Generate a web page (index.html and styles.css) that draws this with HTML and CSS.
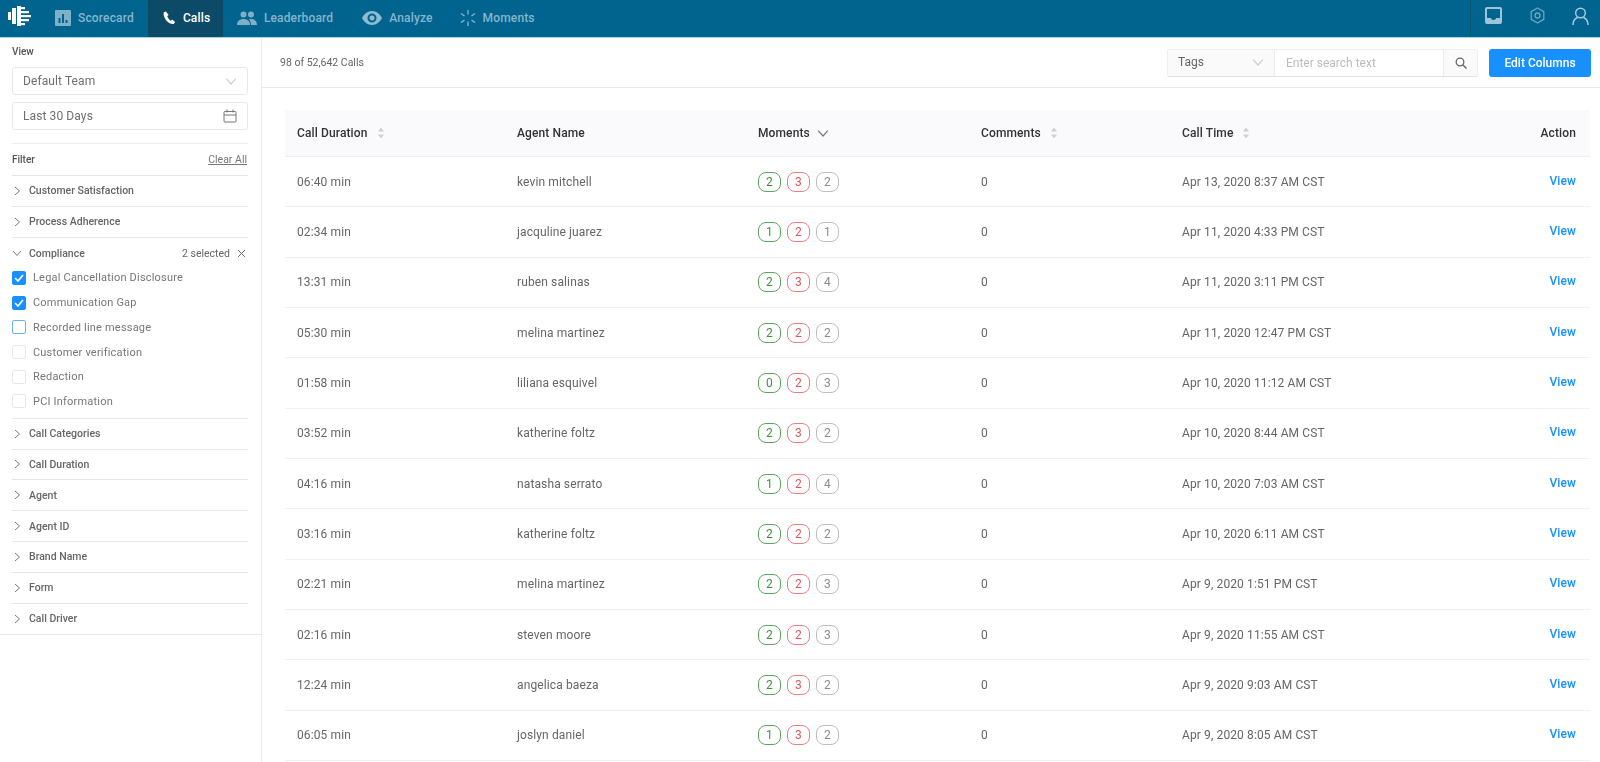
FILE: index.html
```html
<!DOCTYPE html>
<html lang="en">
<head>
<meta charset="utf-8">
<title>Calls</title>
<link rel="stylesheet" href="styles.css">
</head>
<body>
<svg class="defs" width="0" height="0" aria-hidden="true">
  <symbol id="sort" viewBox="0 0 8 12"><path d="M4 0.500 7 4.500H1Z M4 11.500 1 7.500H7Z" fill="#cfcfd2"/></symbol>
  <symbol id="chev-r" viewBox="0 0 10 10"><path d="M3 1 7.500 5 3 9" fill="none" stroke="#777" stroke-width="1"/></symbol>
  <symbol id="chev-d" viewBox="0 0 10 10"><path d="M1 3 5 7.500 9 3" fill="none" stroke="#777" stroke-width="1"/></symbol>
</svg>
<header class="topbar">
  <svg class="logo" viewBox="0 0 23 20" width="23" height="20">
    <g fill="#fff">
      <rect x="0" y="6" width="3" height="8"/>
      <rect x="4" y="2" width="4" height="16"/>
      <rect x="9" y="0" width="4" height="20"/>
      <rect x="13" y="1" width="4" height="2.200"/>
      <rect x="13" y="5" width="8" height="2.200"/>
      <rect x="13" y="9" width="10" height="2.200"/>
      <rect x="13" y="13" width="8" height="2.200"/>
      <rect x="13" y="17" width="4" height="2.200"/>
    </g>
  </svg>
  <nav class="nav">
    <a class="nav-item nav-score">
      <svg class="nav-icon" width="16" height="16" viewBox="0 0 16 16"><path fill="#7fb0c8" fill-rule="evenodd" d="M1 0h14a1 1 0 0 1 1 1v14a1 1 0 0 1-1 1H1a1 1 0 0 1-1-1V1a1 1 0 0 1 1-1ZM3.500 8v5h2V8Zm3.500-4v9h2V4Zm3.500 6v3h2v-3Z"/></svg>
      <span>Scorecard</span>
    </a>
    <a class="nav-item nav-active">
      <svg class="nav-icon" width="14" height="15" viewBox="0 0 24 24"><path fill="#fff" d="M6.600 1.500 3 3C2 7 3.500 12 7 16.500s8 7 13 6.500l2.500-3.500-5-4-2.500 2c-2-.7-5.500-5-6-8l2.500-2Z"/></svg>
      <span>Calls</span>
    </a>
    <a class="nav-item nav-board">
      <svg class="nav-icon" width="20" height="14" viewBox="0 0 20 14"><g fill="#7fb0c8"><circle cx="6.500" cy="3.500" r="3"/><circle cx="14" cy="3.500" r="3"/><path d="M0 14c0-4 3-6 6.500-6S13 10 13 14Z"/><path d="M14 14c0-2-.5-4-2-5.600.7-.3 1.400-.4 2.200-.4 3 0 5.800 2 5.800 6Z"/></g></svg>
      <span>Leaderboard</span>
    </a>
    <a class="nav-item nav-analyze">
      <svg class="nav-icon" width="20" height="14" viewBox="0 0 20 14"><path fill="#8fbcd2" fill-rule="evenodd" d="M10 0c4.500 0 8 3 10 7-2 4-5.500 7-10 7S2 11 0 7c2-4 5.500-7 10-7Zm0 2.500a4.500 4.500 0 1 0 0 9 4.500 4.500 0 0 0 0-9Zm0 2a2.500 2.500 0 1 1 0 5 2.500 2.500 0 0 1 0-5Z"/></svg>
      <span>Analyze</span>
    </a>
    <a class="nav-item nav-moments">
      <svg class="nav-icon" width="16" height="16" viewBox="0 0 16 16"><g stroke="#8fbcd2" stroke-width="1.200" fill="none"><path d="M8 0v4.500M8 11.500V16M1 3.500 4.500 6M11.500 10 15 12.500M1 12.500 4.500 10M11.500 6 15 3.500"/></g></svg>
      <span>Moments</span>
    </a>
  </nav>
  <div class="top-actions">
    <svg width="17" height="17" viewBox="0 0 17 17"><path fill="#9cc6d8" fill-rule="evenodd" d="M2 0h13a2 2 0 0 1 2 2v13a2 2 0 0 1-2 2H2a2 2 0 0 1-2-2V2a2 2 0 0 1 2-2Zm0 2v9h4c0 1 1 2 2.500 2S11 12 11 11h4V2Z"/></svg>
    <svg width="17" height="17" viewBox="0 0 17 17"><g fill="none" stroke="#6fa6c0" stroke-width="1.300"><path d="M8.500 1 14.800 4.600V12.400L8.500 16 2.200 12.400V4.600Z" stroke-linejoin="round"/><circle cx="8.500" cy="8.500" r="2.500"/></g></svg>
    <svg width="17" height="18" viewBox="0 0 17 18"><g fill="none" stroke="#a9cddd" stroke-width="1.400"><circle cx="8.500" cy="6" r="4.800"/><path d="M1 18c0-4 2-6.500 4.500-7.500M16 18c0-4-2-6.500-4.500-7.500"/></g></svg>
  </div>
</header>
<div class="layout">
  <aside class="sidebar">
    <section class="view-block">
      <div class="label">View</div>
      <div class="field">
        <span>Default Team</span>
        <svg class="chev-light" width="12" height="12"><use href="#chev-d"/></svg>
      </div>
      <div class="field field-date">
        <span>Last 30 Days</span>
        <svg width="14" height="14" viewBox="0 0 14 14"><g fill="none" stroke="#777" stroke-width="1"><rect x="1" y="2.500" width="12" height="10.500" rx="1"/><path d="M1 6h12M4 0.500v3M10 0.500v3"/></g></svg>
      </div>
    </section>
    <section class="filters">
      <div class="filter-head"><span class="label">Filter</span><a class="clear">Clear All</a></div>
      <div class="group"><svg width="10" height="10"><use href="#chev-r"/></svg><b>Customer Satisfaction</b></div>
      <div class="group"><svg width="10" height="10"><use href="#chev-r"/></svg><b>Process Adherence</b></div>
      <div class="group group-open">
        <svg width="10" height="10"><use href="#chev-d"/></svg><b>Compliance</b>
        <span class="selected">2 selected</span>
        <svg class="close" width="9" height="9" viewBox="0 0 9 9"><path d="M1 1 8 8M8 1 1 8" stroke="#666" fill="none"/></svg>
      </div>
      <ul class="checks">
        <li><i class="box on"><svg width="10" height="8" viewBox="0 0 10 8"><path d="M1 4 4 7 9 1" fill="none" stroke="#fff" stroke-width="1.700"/></svg></i>Legal Cancellation Disclosure</li>
        <li><i class="box on"><svg width="10" height="8" viewBox="0 0 10 8"><path d="M1 4 4 7 9 1" fill="none" stroke="#fff" stroke-width="1.700"/></svg></i>Communication Gap</li>
        <li><i class="box focus"></i>Recorded line message</li>
        <li><i class="box"></i>Customer verification</li>
        <li><i class="box"></i>Redaction</li>
        <li><i class="box"></i>PCI Information</li>
      </ul>
      <div class="group"><svg width="10" height="10"><use href="#chev-r"/></svg><b>Call Categories</b></div>
      <div class="group"><svg width="10" height="10"><use href="#chev-r"/></svg><b>Call Duration</b></div>
      <div class="group"><svg width="10" height="10"><use href="#chev-r"/></svg><b>Agent</b></div>
      <div class="group"><svg width="10" height="10"><use href="#chev-r"/></svg><b>Agent ID</b></div>
      <div class="group"><svg width="10" height="10"><use href="#chev-r"/></svg><b>Brand Name</b></div>
      <div class="group"><svg width="10" height="10"><use href="#chev-r"/></svg><b>Form</b></div>
      <div class="group"><svg width="10" height="10"><use href="#chev-r"/></svg><b>Call Driver</b></div>
    </section>
  </aside>
  <main class="content">
    <div class="toolbar">
      <span class="count">98 of 52,642 Calls</span>
      <div class="search">
        <div class="search-type"><span>Tags</span><svg class="chev-light" width="12" height="12"><use href="#chev-d"/></svg></div>
        <div class="search-input">Enter search text</div>
        <div class="search-btn"><svg width="12" height="12" viewBox="0 0 12 12"><circle cx="5" cy="5" r="3.800" fill="none" stroke="#666" stroke-width="1.300"/><path d="M8 8 11.500 11.500" stroke="#666" stroke-width="1.500"/></svg></div>
      </div>
      <button class="edit">Edit Columns</button>
    </div>
    <div class="table">
      <div class="row head">
        <div>Call Duration<svg class="sort" width="8" height="12"><use href="#sort"/></svg></div>
        <div>Agent Name</div>
        <div>Moments<svg class="sort-m" width="12" height="12"><use href="#chev-d"/></svg></div>
        <div>Comments<svg class="sort" width="8" height="12"><use href="#sort"/></svg></div>
        <div>Call Time<svg class="sort" width="8" height="12"><use href="#sort"/></svg></div>
        <div class="end">Action</div>
      </div>
      <div class="row"><div>06:40 min</div><div>kevin mitchell</div><div class="pills"><i class="g">2</i><i class="r">3</i><i class="n">2</i></div><div>0</div><div>Apr 13, 2020 8:37 AM CST</div><a class="end view">View</a></div>
      <div class="row"><div>02:34 min</div><div>jacquline juarez</div><div class="pills"><i class="g">1</i><i class="r">2</i><i class="n">1</i></div><div>0</div><div>Apr 11, 2020 4:33 PM CST</div><a class="end view">View</a></div>
      <div class="row"><div>13:31 min</div><div>ruben salinas</div><div class="pills"><i class="g">2</i><i class="r">3</i><i class="n">4</i></div><div>0</div><div>Apr 11, 2020 3:11 PM CST</div><a class="end view">View</a></div>
      <div class="row"><div>05:30 min</div><div>melina martinez</div><div class="pills"><i class="g">2</i><i class="r">2</i><i class="n">2</i></div><div>0</div><div>Apr 11, 2020 12:47 PM CST</div><a class="end view">View</a></div>
      <div class="row"><div>01:58 min</div><div>liliana esquivel</div><div class="pills"><i class="g">0</i><i class="r">2</i><i class="n">3</i></div><div>0</div><div>Apr 10, 2020 11:12 AM CST</div><a class="end view">View</a></div>
      <div class="row"><div>03:52 min</div><div>katherine foltz</div><div class="pills"><i class="g">2</i><i class="r">3</i><i class="n">2</i></div><div>0</div><div>Apr 10, 2020 8:44 AM CST</div><a class="end view">View</a></div>
      <div class="row"><div>04:16 min</div><div>natasha serrato</div><div class="pills"><i class="g">1</i><i class="r">2</i><i class="n">4</i></div><div>0</div><div>Apr 10, 2020 7:03 AM CST</div><a class="end view">View</a></div>
      <div class="row"><div>03:16 min</div><div>katherine foltz</div><div class="pills"><i class="g">2</i><i class="r">2</i><i class="n">2</i></div><div>0</div><div>Apr 10, 2020 6:11 AM CST</div><a class="end view">View</a></div>
      <div class="row"><div>02:21 min</div><div>melina martinez</div><div class="pills"><i class="g">2</i><i class="r">2</i><i class="n">3</i></div><div>0</div><div>Apr 9, 2020 1:51 PM CST</div><a class="end view">View</a></div>
      <div class="row"><div>02:16 min</div><div>steven moore</div><div class="pills"><i class="g">2</i><i class="r">2</i><i class="n">3</i></div><div>0</div><div>Apr 9, 2020 11:55 AM CST</div><a class="end view">View</a></div>
      <div class="row"><div>12:24 min</div><div>angelica baeza</div><div class="pills"><i class="g">2</i><i class="r">3</i><i class="n">2</i></div><div>0</div><div>Apr 9, 2020 9:03 AM CST</div><a class="end view">View</a></div>
      <div class="row"><div>06:05 min</div><div>joslyn daniel</div><div class="pills"><i class="g">1</i><i class="r">3</i><i class="n">2</i></div><div>0</div><div>Apr 9, 2020 8:05 AM CST</div><a class="end view">View</a></div>
    </div>
  </main>
</div>
</body>
</html>
```
FILE: styles.css
```css
* { box-sizing: border-box; }
html, body { height: 100%; }
body {
  margin: 0;
  height: 762px;
  overflow: hidden;
  background: #fff;
  color: #666;
  font-family: Roboto, "Liberation Sans", sans-serif;
  font-size: 12px;
  display: flex;
  flex-direction: column;
  filter: blur(0.4px);
}
.defs { position: absolute; }
svg { display: block; flex: none; }

/* top bar */
.topbar {
  height: 38px;
  flex: none;
  display: flex;
  align-items: stretch;
  background: #00648f;
  border-bottom: 1px solid #9fd6e6;
  color: #86b5cc;
  font-weight: 500;
  letter-spacing: .15px;
}
.logo { margin: 6px 0 0 8px; }
.nav { display: flex; margin-left: 24px; }
.nav-item { display: flex; align-items: center; gap: 7px; padding-bottom: 2px; }
.nav-active {
  width: 75px;
  margin-left: 14px;
  padding-left: 14px;
  background: #0c4a68;
  color: #fff;
}
.nav-board { margin-left: 14px; }
.nav-analyze { margin-left: 29px; }
.nav-moments { margin-left: 27px; }
.top-actions {
  margin-left: auto;
  width: 130px;
  border-left: 1px solid #0a5574;
  display: flex;
  align-items: flex-start;
  padding: 7px 11px 0 14px;
  justify-content: space-between;
}

/* layout */
.layout { flex: 1; display: flex; min-height: 0; }
.sidebar {
  width: 262px;
  flex: none;
  border-right: 1px solid #ececef;
}
.view-block { padding: 7px 13px 13px 12px; }
.label { color: #555; font-size: 10px; font-weight: 500; line-height: 14px; }
.field {
  height: 28px;
  margin-top: 8px;
  padding: 0 10px;
  display: flex;
  justify-content: space-between;
  align-items: center;
  border: 1px solid #e8e8eb;
  border-radius: 3px;
  color: #6f6f6f;
  letter-spacing: .1px;
}
.field-date { margin-top: 7px; }
.chev-light { opacity: .35; }

.filters { border-bottom: 1px solid #e9e9ec; }
.filter-head {
  margin: 0 13px 0 12px;
  height: 33px;
  border-top: 1px solid #eeeef0;
  border-bottom: 1px solid #e6e6e9;
  display: flex;
  justify-content: space-between;
  align-items: center;
}
.clear { font-size: 10.500px; color: #777; text-decoration: underline; margin-right: 1px; }
.group {
  margin: 0 13px 0 12px;
  height: 30.800px;
  display: flex;
  align-items: center;
  gap: 7px;
  border-bottom: 1px solid #e6e6e9;
  font-size: 10.500px;
  color: #666;
}
.group:last-child { border-bottom: 0; }
.group b { font-weight: 500; }
.group-open { border-bottom: 0; height: 28px; padding-top: 3px; }
.selected { margin-left: auto; }
.close { margin-right: 2px; }
.checks {
  list-style: none;
  margin: 0 13px 0 12px;
  padding: 0 0 4px;
  border-bottom: 1px solid #e6e6e9;
}
.checks li {
  height: 24.700px;
  display: flex;
  align-items: center;
  gap: 7px;
  font-size: 11px;
  letter-spacing: .2px;
  color: #777;
}
.box {
  width: 14px;
  height: 14px;
  border: 1px solid #e6e6e9;
  border-radius: 2px;
  display: flex;
  align-items: center;
  justify-content: center;
}
.box.on { background: #1890ff; border-color: #1890ff; }
.box.focus { border-color: #69b1f5; }

/* content */
.content { flex: 1; min-width: 0; }
.toolbar {
  height: 50px;
  display: flex;
  align-items: center;
  padding: 0 9px 0 18px;
  border-bottom: 1px solid #e9e9ec;
}
.count { font-size: 10.500px; color: #666; margin-right: auto; }
.search {
  display: flex;
  height: 28px;
  width: 311px;
  border: 1px solid #efeff1;
  border-bottom-color: #e2e2e5;
  border-radius: 2px;
}
.search-type {
  width: 107px;
  padding: 0 10px 2px;
  background: #fafafa;
  border-right: 1px solid #ececef;
  display: flex;
  align-items: center;
  justify-content: space-between;
  color: #666;
}
.search-input {
  flex: 1;
  padding: 0 11px;
  display: flex;
  align-items: center;
  color: #bcbcbc;
}
.search-btn {
  width: 34px;
  background: #fafafa;
  border-left: 1px solid #ececef;
  display: flex;
  align-items: center;
  justify-content: center;
}
.edit {
  width: 102px;
  height: 28px;
  margin-left: 11px;
  background: #1890ff;
  border: 0;
  border-radius: 3px;
  color: #fff;
  font: 500 12px Roboto, "Liberation Sans", sans-serif;
}

/* table */
.table { margin: 22px 10px 0 23px; }
.row {
  display: grid;
  grid-template-columns: 220px 241px 223px 201px 1fr 82px;
  align-items: center;
  height: 50.350px;
  padding: 0 14px 0 12px;
  border-bottom: 1px solid #f0f0f3;
  letter-spacing: .12px;
}
.row.head {
  height: 47px;
  background: #faf9fc;
  color: #333;
  font-weight: 500;
  border-bottom-color: #eeeef1;
}
.row.head > div { display: flex; align-items: center; }
.end { justify-self: end; }
.sort { margin-left: 9px; }
.sort-m { margin-left: 7px; }
.view { color: #1890ff; font-weight: 500; margin-top: -2px; }
.pills { display: flex; gap: 6px; }
.pills i {
  width: 23px;
  height: 20px;
  border: 1px solid;
  border-radius: 8px;
  display: flex;
  align-items: center;
  justify-content: center;
  font-style: normal;
  font-size: 12px;
}
.pills .g { color: #3f8f3f; border-color: #5aa65a; }
.pills .r { color: #e0555b; border-color: #ec7d80; }
.pills .n { color: #8a8a8a; border-color: #bdbdbd; }
```
